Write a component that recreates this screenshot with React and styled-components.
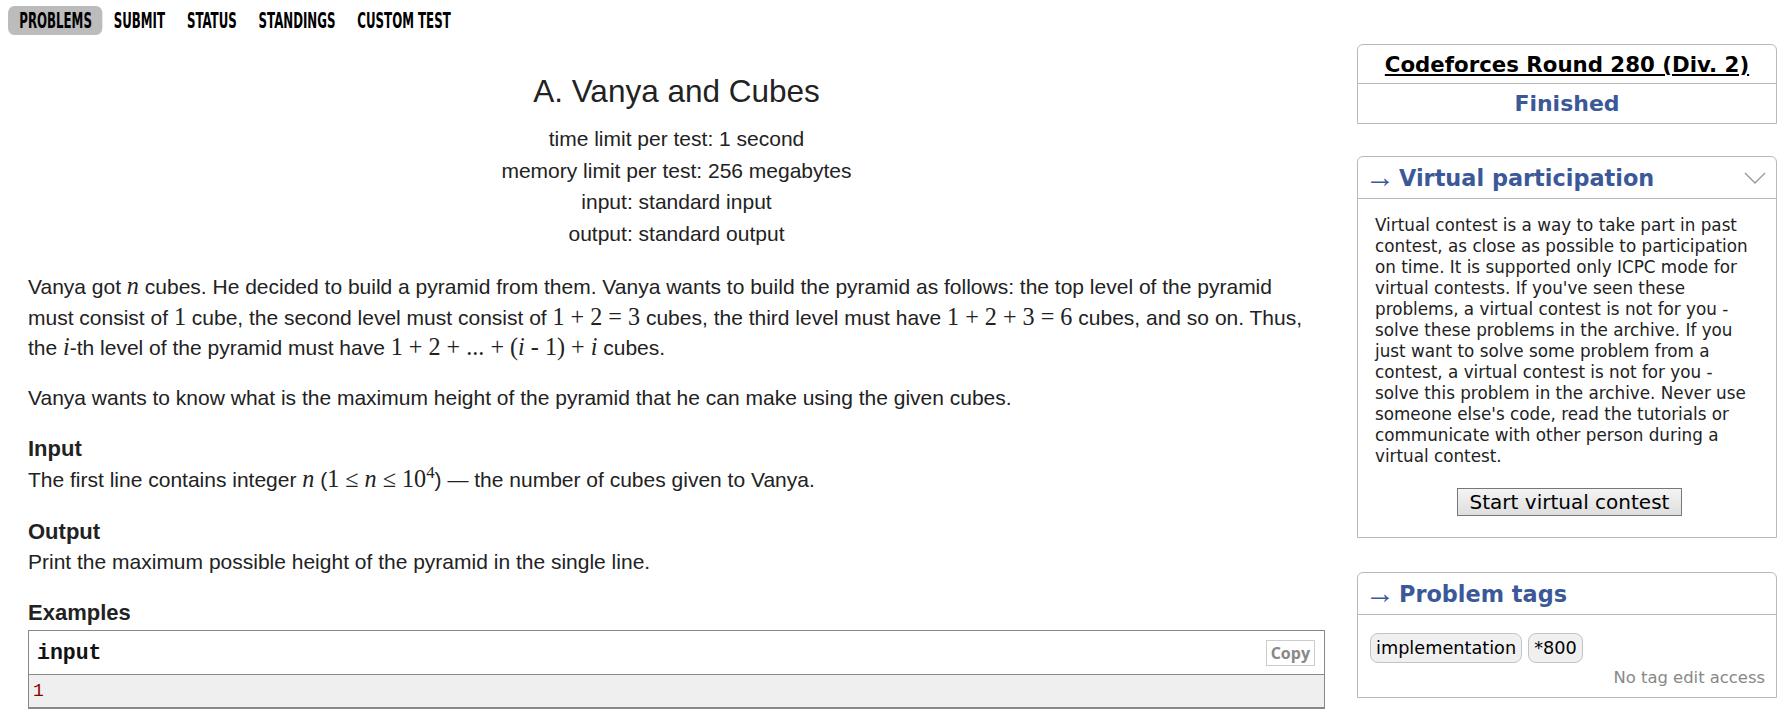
import React from 'react';
import styled, { createGlobalStyle } from 'styled-components';

const GlobalStyle = createGlobalStyle`
  body {
    margin: 0;
    background: #fff;
    color: #222;
    font-family: "Liberation Sans", Arial, sans-serif;
  }
`;

const Page = styled.div`
  display: flex;
  align-items: flex-start;
  width: 1789px;
  box-sizing: border-box;
  padding: 6px 12px 0 8px;
`;

const MainColumn = styled.div`
  flex: 1;
  min-width: 0;
`;

const Menu = styled.ul`
  display: flex;
  list-style: none;
  margin: 0;
  padding: 0;
  transform: scaleX(0.625);
  transform-origin: left center;
`;

const MenuItem = styled.li`
  height: 29px;
  line-height: 30px;
  padding: 0 17px 0 18px;
  border-radius: 10px / 7px;
  background: ${(p) => (p.active ? '#bcbcbc' : 'transparent')};
  font-family: "DejaVu Sans Condensed", "DejaVu Sans", sans-serif;
  font-stretch: condensed;
  font-weight: bold;
  font-size: 21px;
  color: #000;
`;

const Statement = styled.div`
  margin-left: 20px;
  font-size: 21px;
`;

const Header = styled.div`
  text-align: center;
  padding-top: 37px;
`;

const Title = styled.div`
  font-size: 31.5px;
  line-height: 38px;
  margin-bottom: 13px;
`;

const Limit = styled.div`
  line-height: 31.5px;
`;

const Para = styled.p`
  margin: ${(p) => p.top || 0}px 0 0;
  padding-right: 6px;
  line-height: 30.5px;
`;

const Math = styled.span`
  font-family: "Liberation Serif", "Times New Roman", serif;
  font-size: 1.15em;
  line-height: 1;
  white-space: nowrap;
`;

const Var = styled.i`
  font-family: "Liberation Serif", "Times New Roman", serif;
`;

const Sup = styled.sup`
  font-size: 0.7em;
  line-height: 0;
`;

const SectionTitle = styled.div`
  margin-top: ${(p) => p.top}px;
  font-weight: bold;
  font-size: 22px;
  line-height: 26px;
`;

const ExampleBox = styled.div`
  margin-top: 4px;
  border: 1px solid #888;
  border-bottom-width: 2px;
`;

const ExampleHead = styled.div`
  display: flex;
  align-items: center;
  justify-content: space-between;
  height: 43px;
  padding: 0 9px 0 8px;
  border-bottom: 1px solid #888;
  font-family: "Liberation Mono", "DejaVu Sans Mono", monospace;
  font-weight: bold;
  font-size: 21.5px;
  color: #111;
`;

const CopyButton = styled.span`
  border: 1px solid #ccc;
  padding: 1px 4px;
  font-family: "Open Sans", sans-serif;
  font-weight: bold;
  font-size: 16px;
  color: #888;
  line-height: 22px;
`;

const ExampleBody = styled.pre`
  margin: 0;
  padding: 0 4px;
  height: 32px;
  line-height: 32px;
  background: #efefef;
  font-family: "Liberation Mono", monospace;
  font-size: 18px;
  color: #800;
`;

const Sidebar = styled.div`
  width: 420px;
  flex: none;
  margin-left: 32px;
  padding-top: 38px;
  font-family: "DejaVu Sans", Verdana, sans-serif;
`;

const RoundBox = styled.div`
  border: 1px solid #b9b9b9;
  border-radius: 6px 6px 0 0;
  margin-bottom: ${(p) => p.gap || 0}px;
`;

const BoxRow = styled.div`
  height: ${(p) => p.h}px;
  display: flex;
  align-items: center;
  justify-content: center;
  border-top: ${(p) => (p.divided ? '1px solid #b9b9b9' : 'none')};
  font-weight: bold;
  font-size: ${(p) => p.size}px;
  color: ${(p) => p.color || '#000'};
`;

const ContestLink = styled.a`
  color: #000;
  text-decoration: underline;
`;

const CaptionRow = styled.div`
  height: 41px;
  display: flex;
  align-items: center;
  padding: 0 10px 0 7px;
  border-bottom: 1px solid #b9b9b9;
  color: #3b5998;
  font-weight: bold;
  font-size: 22.4px;
`;

const Arrow = styled.span`
  font-weight: normal;
  font-family: "Liberation Serif", serif;
  font-size: 30px;
  line-height: 20px;
  margin-right: 4px;
  position: relative;
  top: -1px;
`;

const CaptionText = styled.span`
  flex: 1;
`;

const BoxBody = styled.div`
  padding: ${(p) => p.pad};
  font-size: 16.8px;
  line-height: 21px;
  color: #222;
`;

const StartButton = styled.button`
  display: block;
  margin: 21px auto 0;
  height: 28px;
  padding: 0 12px;
  border: 1px solid #777;
  background: linear-gradient(#f4f4f4, #dedede);
  font-family: "DejaVu Sans", Verdana, sans-serif;
  font-size: 20px;
  line-height: 26px;
  color: #000;
`;

const Tags = styled.div`
  display: flex;
  gap: 6px;
`;

const Tag = styled.span`
  height: 28px;
  line-height: 28px;
  padding: 0 5px;
  border: 1px solid #c4c4c4;
  border-radius: 8px;
  background: #f0f0f0;
  font-size: 17.7px;
  color: #000;
`;

const NoAccess = styled.div`
  text-align: right;
  color: #888;
  font-size: 16.4px;
  line-height: 22px;
  margin-top: 4px;
`;

const Chevron = () => (
  <svg width="22" height="12" viewBox="0 0 22 12">
    <polyline points="1,1 11,11 21,1" fill="none" stroke="#999" strokeWidth="1.4" />
  </svg>
);

const virtualLines = [
  'Virtual contest is a way to take part in past',
  'contest, as close as possible to participation',
  'on time. It is supported only ICPC mode for',
  "virtual contests. If you've seen these",
  'problems, a virtual contest is not for you -',
  'solve these problems in the archive. If you',
  'just want to solve some problem from a',
  'contest, a virtual contest is not for you -',
  'solve this problem in the archive. Never use',
  "someone else's code, read the tutorials or",
  'communicate with other person during a',
  'virtual contest.',
];

export default function App() {
  return (
    <>
      <GlobalStyle />
      <Page>
        <MainColumn>
          <Menu>
            <MenuItem active>PROBLEMS</MenuItem>
            <MenuItem>SUBMIT</MenuItem>
            <MenuItem>STATUS</MenuItem>
            <MenuItem>STANDINGS</MenuItem>
            <MenuItem>CUSTOM TEST</MenuItem>
          </Menu>
          <Statement>
            <Header>
              <Title>A. Vanya and Cubes</Title>
              <Limit>time limit per test: 1 second</Limit>
              <Limit>memory limit per test: 256 megabytes</Limit>
              <Limit>input: standard input</Limit>
              <Limit>output: standard output</Limit>
            </Header>
            <Para top={23}>
              Vanya got <Math><Var>n</Var></Math> cubes. He decided to build a pyramid from them. Vanya wants to
              build the pyramid as follows: the top level of the pyramid must consist of <Math>1</Math> cube, the
              second level must consist of <Math>1 + 2 = 3</Math> cubes, the third level must have{' '}
              <Math>1 + 2 + 3 = 6</Math> cubes, and so on. Thus, the <Math><Var>i</Var></Math>-th level of the
              pyramid must have <Math>1 + 2 + ... + (<Var>i</Var> - 1) + <Var>i</Var></Math> cubes.
            </Para>
            <Para top={19}>
              Vanya wants to know what is the maximum height of the pyramid that he can make using the given cubes.
            </Para>
            <SectionTitle top={23}>Input</SectionTitle>
            <Para top={3}>
              The first line contains integer <Math><Var>n</Var></Math> (<Math>1 ≤ <Var>n</Var> ≤ 10<Sup>4</Sup></Math>) — the
              number of cubes given to Vanya.
            </Para>
            <SectionTitle top={23}>Output</SectionTitle>
            <Para top={2}>Print the maximum possible height of the pyramid in the single line.</Para>
            <SectionTitle top={23}>Examples</SectionTitle>
            <ExampleBox>
              <ExampleHead>
                input
                <CopyButton>Copy</CopyButton>
              </ExampleHead>
              <ExampleBody>1</ExampleBody>
            </ExampleBox>
          </Statement>
        </MainColumn>
        <Sidebar>
          <RoundBox gap={32}>
            <BoxRow h={38} size={21.3}>
              <ContestLink>Codeforces Round 280 (Div. 2)</ContestLink>
            </BoxRow>
            <BoxRow h={39} size={22} divided color="#3b5998">Finished</BoxRow>
          </RoundBox>
          <RoundBox gap={34}>
            <CaptionRow>
              <Arrow>→</Arrow>
              <CaptionText>Virtual participation</CaptionText>
              <Chevron />
            </CaptionRow>
            <BoxBody pad="16px 12px 21px 17px">
              {virtualLines.map((line, i) => (
                <div key={i}>{line}</div>
              ))}
              <StartButton>Start virtual contest</StartButton>
            </BoxBody>
          </RoundBox>
          <RoundBox>
            <CaptionRow>
              <Arrow>→</Arrow>
              <CaptionText>Problem tags</CaptionText>
            </CaptionRow>
            <BoxBody pad="18px 11px 8px 12px">
              <Tags>
                <Tag>implementation</Tag>
                <Tag>*800</Tag>
              </Tags>
              <NoAccess>No tag edit access</NoAccess>
            </BoxBody>
          </RoundBox>
        </Sidebar>
      </Page>
    </>
  );
}
